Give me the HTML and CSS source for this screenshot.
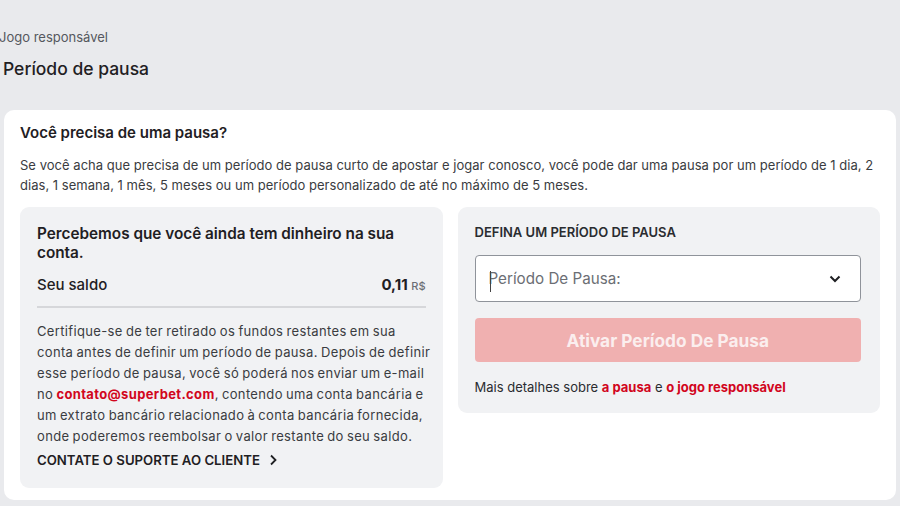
FILE: index.html
```html
<!DOCTYPE html>
<html lang="pt-BR">
<head>
    <meta charset="UTF-8">
    <meta name="viewport" content="width=device-width, initial-scale=1.0">
    <title>Período de pausa</title>
    <link rel="stylesheet" href="styles.css">
</head>
<body>

<div class="breadcrumb">Jogo responsável</div>
<h1 class="page-title">Período de pausa</h1>

<div class="card">
    <h2>Você precisa de uma pausa?</h2>
    <p class="intro">Se você acha que precisa de um período de pausa curto de apostar e jogar conosco, você pode dar uma pausa por um período de 1 dia, 2 dias, 1 semana, 1 mês, 5 meses ou um período personalizado de até no máximo de 5 meses.</p>

    <div class="columns">
        <!-- Saldo restante -->
        <div class="box">
            <h3>Percebemos que você ainda tem dinheiro na sua conta.</h3>
            <div class="balance">
                <span>Seu saldo</span>
                <span class="amount">0,11 <small>R$</small></span>
            </div>
            <p class="note">Certifique-se de ter retirado os fundos restantes em sua<br>
                conta antes de definir um período de pausa. Depois de definir<br>
                esse período de pausa, você só poderá nos enviar um e-mail<br>
                no <a href="#">contato@superbet.com</a>, contendo uma conta bancária e<br>
                um extrato bancário relacionado à conta bancária fornecida,<br>
                onde poderemos reembolsar o valor restante do seu saldo.</p>
            <a class="support" href="#">CONTATE O SUPORTE AO CLIENTE
                <svg width="8" height="12" viewBox="0 0 8 12"><path d="M2 1.5l4.5 4.5L2 10.5" fill="none" stroke="#1f2023" stroke-width="1.8"/></svg>
            </a>
        </div>

        <!-- Formulario de pausa -->
        <div class="box form-box">
            <div class="label">DEFINA UM PERÍODO DE PAUSA</div>
            <div class="select">
                <span class="placeholder">Período De Pausa:</span>
                <svg width="12" height="8" viewBox="0 0 12 8"><path d="M1.5 1.5l4.5 4.5 4.5-4.5" fill="none" stroke="#1f2023" stroke-width="2"/></svg>
            </div>
            <button type="button" disabled>Ativar Período De Pausa</button>
            <p class="more">Mais detalhes sobre <a href="#">a pausa</a> e <a href="#">o jogo responsável</a></p>
        </div>
    </div>
</div>

</body>
</html>
```

FILE: styles.css
```css
body {
    font-family: Inter, "Noto Sans", sans-serif;
    background-color: #e9eaed;
    color: #1f2023;
    margin: 0;
    padding: 29px 4px 0 0;
}
.breadcrumb {
    font-size: 13px;
    line-height: 16px;
    color: #55585e;
    margin-left: -1px;
}
.page-title {
    font-size: 17.5px;
    font-weight: 500;
    line-height: 24px;
    margin: 12px 0 29px 3px;
}
.card {
    background-color: #fff;
    margin-left: 4px;
    padding: 13px 16px 12px 16px;
    border-radius: 10px;
}
.card h2 {
    font-size: 15px;
    font-weight: 600;
    line-height: 20px;
    margin: 0;
}
.intro {
    font-size: 13px;
    letter-spacing: 0.03px;
    line-height: 20px;
    color: #3a3c41;
    margin: 12px 0;
}
.columns {
    display: grid;
    grid-template-columns: minmax(0, 1fr) minmax(0, 1fr);
    gap: 15px;
    align-items: start;
}
.box {
    background-color: #f1f2f4;
    border-radius: 9px;
    padding: 17px 17px 18px;
}
.box h3 {
    font-size: 15.3px;
    font-weight: 600;
    line-height: 19px;
    margin: 0;
}
.balance {
    display: flex;
    justify-content: space-between;
    font-size: 15px;
    font-weight: 500;
    line-height: 20px;
    margin-top: 13px;
    padding-bottom: 10px;
    border-bottom: 2px solid #d6d7da;
}
.amount {
    font-weight: 700;
}
.amount small {
    font-size: 11px;
    font-weight: 500;
    color: #6b6e74;
}
.note {
    font-size: 13px;
    letter-spacing: 0.35px;
    word-spacing: -0.8px;
    line-height: 21px;
    white-space: nowrap;
    color: #3a3c41;
    margin: 13px 0 3px;
}
a {
    color: #d2061d;
    font-weight: 700;
    text-decoration: none;
}
.support {
    display: flex;
    align-items: center;
    gap: 9px;
    font-size: 13.2px;
    font-weight: 600;
    line-height: 20px;
    color: #1f2023;
}
.form-box {
    padding-top: 17px;
}
.label {
    font-size: 13px;
    font-weight: 600;
    line-height: 16px;
    color: #2a2c30;
}
.select {
    display: flex;
    align-items: center;
    justify-content: space-between;
    height: 45px;
    margin: 15px 2px 0 0;
    padding: 0 19px 0 13px;
    background-color: #fff;
    border: 1px solid #8f939a;
    border-radius: 4px;
}
.placeholder {
    position: relative;
    font-size: 15.2px;
    color: #6b6e74;
}
/* cursor de texto */
.placeholder::before {
    content: "";
    position: absolute;
    left: 1px;
    top: 2px;
    width: 1px;
    height: 21px;
    background-color: #444;
}
button {
    width: calc(100% - 2px);
    height: 44px;
    margin-top: 16px;
    background-color: #f0b0b0;
    color: #fbeeee;
    border: none;
    border-radius: 4px;
    font-family: inherit;
    font-size: 17.3px;
    font-weight: 700;
}
.more {
    font-size: 13px;
    line-height: 16px;
    color: #2a2c30;
    margin: 17px 0 0;
}
```
